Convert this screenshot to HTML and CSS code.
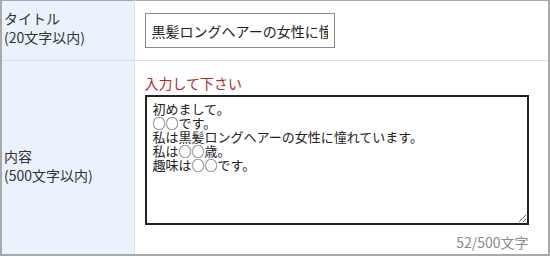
FILE: index.html
```html
<!DOCTYPE html>
<html lang="ja">
<head>
    <meta charset="UTF-8">
    <title>投稿フォーム</title>
    <link rel="stylesheet" href="styles.css">
</head>
<body>
    <table class="form-table">
        <tr class="row-title">
            <th>タイトル<br>(20文字以内)</th>
            <td>
                <input type="text" class="title-input" value="黒髪ロングヘアーの女性に憧れています">
            </td>
        </tr>
        <tr class="row-body">
            <th>内容<br>(500文字以内)</th>
            <td>
                <p class="notice">入力して下さい</p>
                <textarea class="body-input">初めまして。
○○です。
私は黒髪ロングヘアーの女性に憧れています。
私は○○歳。
趣味は○○です。
</textarea>
                <p class="counter">52/500文字</p>
            </td>
        </tr>
    </table>
</body>
</html>
```

FILE: styles.css
```css
body {
    margin: 0;
    font-family: "Noto Sans CJK JP", sans-serif;
    background: #fff;
}

/* フォーム全体 */
.form-table {
    width: 550px;
    border-collapse: collapse;
    border-top: 1px solid #a9a9a9;
    border-left: 2px solid #a9a9a9;
    border-right: 2px solid #a9a9a9;
    border-bottom: 2px solid #a9a9a9;
}

.form-table th,
.form-table td {
    box-sizing: border-box;
    padding: 0;
    vertical-align: top;
}

.form-table th {
    width: 133px;
    padding-left: 2px;
    background: #eaf3fd; /* 水色 */
    border-right: 1px solid #d4e1ee;
    color: #333;
    font-size: 14px;
    font-weight: normal;
    line-height: 19px;
    text-align: left;
}

.form-table td {
    padding: 0 19px 0 10px;
}

.row-title th,
.row-title td {
    height: 60px;
    border-bottom: 1px solid #d4e1ee;
}

.row-title th {
    padding-top: 8px;
}

.row-title td {
    padding-top: 12px;
}

.row-body th,
.row-body td {
    height: 194px;
}

.row-body th {
    padding-top: 86px;
}

.row-body td {
    padding-top: 13px;
}

/* タイトル入力 */
.title-input {
    display: block;
    width: 190px;
    height: 35px;
    box-sizing: border-box;
    padding: 0 6px;
    border: 1px solid #8a8a8a;
    font-family: inherit;
    font-size: 14px;
    color: #222;
    outline: none;
}

.notice {
    margin: 0 0 3px;
    color: #b02a2a; /* 赤 */
    font-size: 14px;
    line-height: 18px;
}

/* 本文入力 */
.body-input {
    display: block;
    width: 384px;
    height: 130px;
    box-sizing: border-box;
    margin: 0;
    padding: 5px 6px;
    border: 2px solid #222;
    font-family: inherit;
    font-size: 13px;
    line-height: 14px;
    color: #222;
    outline: none;
}

.counter {
    width: 384px;
    margin: 8px 0 0;
    color: #8a8a8a;
    font-size: 14px;
    line-height: 18px;
    text-align: right;
}
```
